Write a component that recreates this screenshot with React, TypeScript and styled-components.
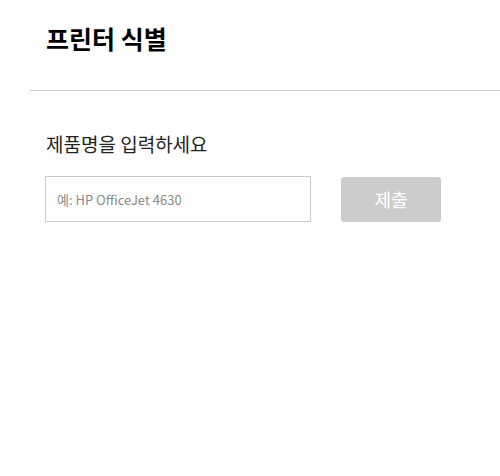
import React, { ChangeEvent, useCallback, useState } from 'react';
import styled, { createGlobalStyle } from 'styled-components';

// #region styled
const GlobalStyle = createGlobalStyle`
  body {
    margin: 0;
    background: #fff;
    font-family: "Noto Sans CJK KR", "Noto Sans", sans-serif;
    color: #000;
  }
`;

const Page = styled.div`
  padding-left: 30px;
`;

const Header = styled.div`
  border-bottom: 1px solid #cccccc;
  padding: 18px 16px 0;
  height: 91px;
  box-sizing: border-box;
`;

const Title = styled.h1`
  font-size: 25px;
  font-weight: 700;
  line-height: 40px;
  margin: 0;
`;

const Body = styled.div`
  padding: 39px 15px 0;
`;

const Label = styled.label`
  display: block;
  font-size: 19px;
  line-height: 28px;
  color: #222;
  margin-left: 1px;
`;

const Row = styled.div`
  align-items: center;
  display: flex;
  flex-direction: row;
  gap: 30px;
  margin-top: 18px;
`;

const TextBox = styled.input`
  border: 1px solid #cccccc;
  box-sizing: border-box;
  font-family: inherit;
  font-size: 13px;
  height: 46px;
  padding: 0 11px;
  width: 266px;
  outline: none;
  &::placeholder {
    color: #8a8a8a;
  }
`;

const SubmitButton = styled.button`
  background-color: #cccccc;
  border: none;
  border-radius: 3px;
  color: white;
  font-family: inherit;
  font-size: 18px;
  height: 45px;
  padding: 0;
  width: 100px;
`;
// #endregion

const App: React.FC = () => {
  const [productName, setProductName] = useState<string>('');
  const onChangeName = useCallback((e: ChangeEvent<HTMLInputElement>) => {
    setProductName(e.currentTarget.value);
  }, []);

  return (
    <Page>
      <GlobalStyle />
      <Header>
        <Title>프린터 식별</Title>
      </Header>
      <Body>
        <Label htmlFor="product">제품명을 입력하세요</Label>
        <Row>
          <TextBox
            id="product"
            type="text"
            value={productName}
            onChange={onChangeName}
            placeholder="예: HP OfficeJet 4630"
          />
          <SubmitButton disabled={productName === ''}>제출</SubmitButton>
        </Row>
      </Body>
    </Page>
  );
};

export default App;
